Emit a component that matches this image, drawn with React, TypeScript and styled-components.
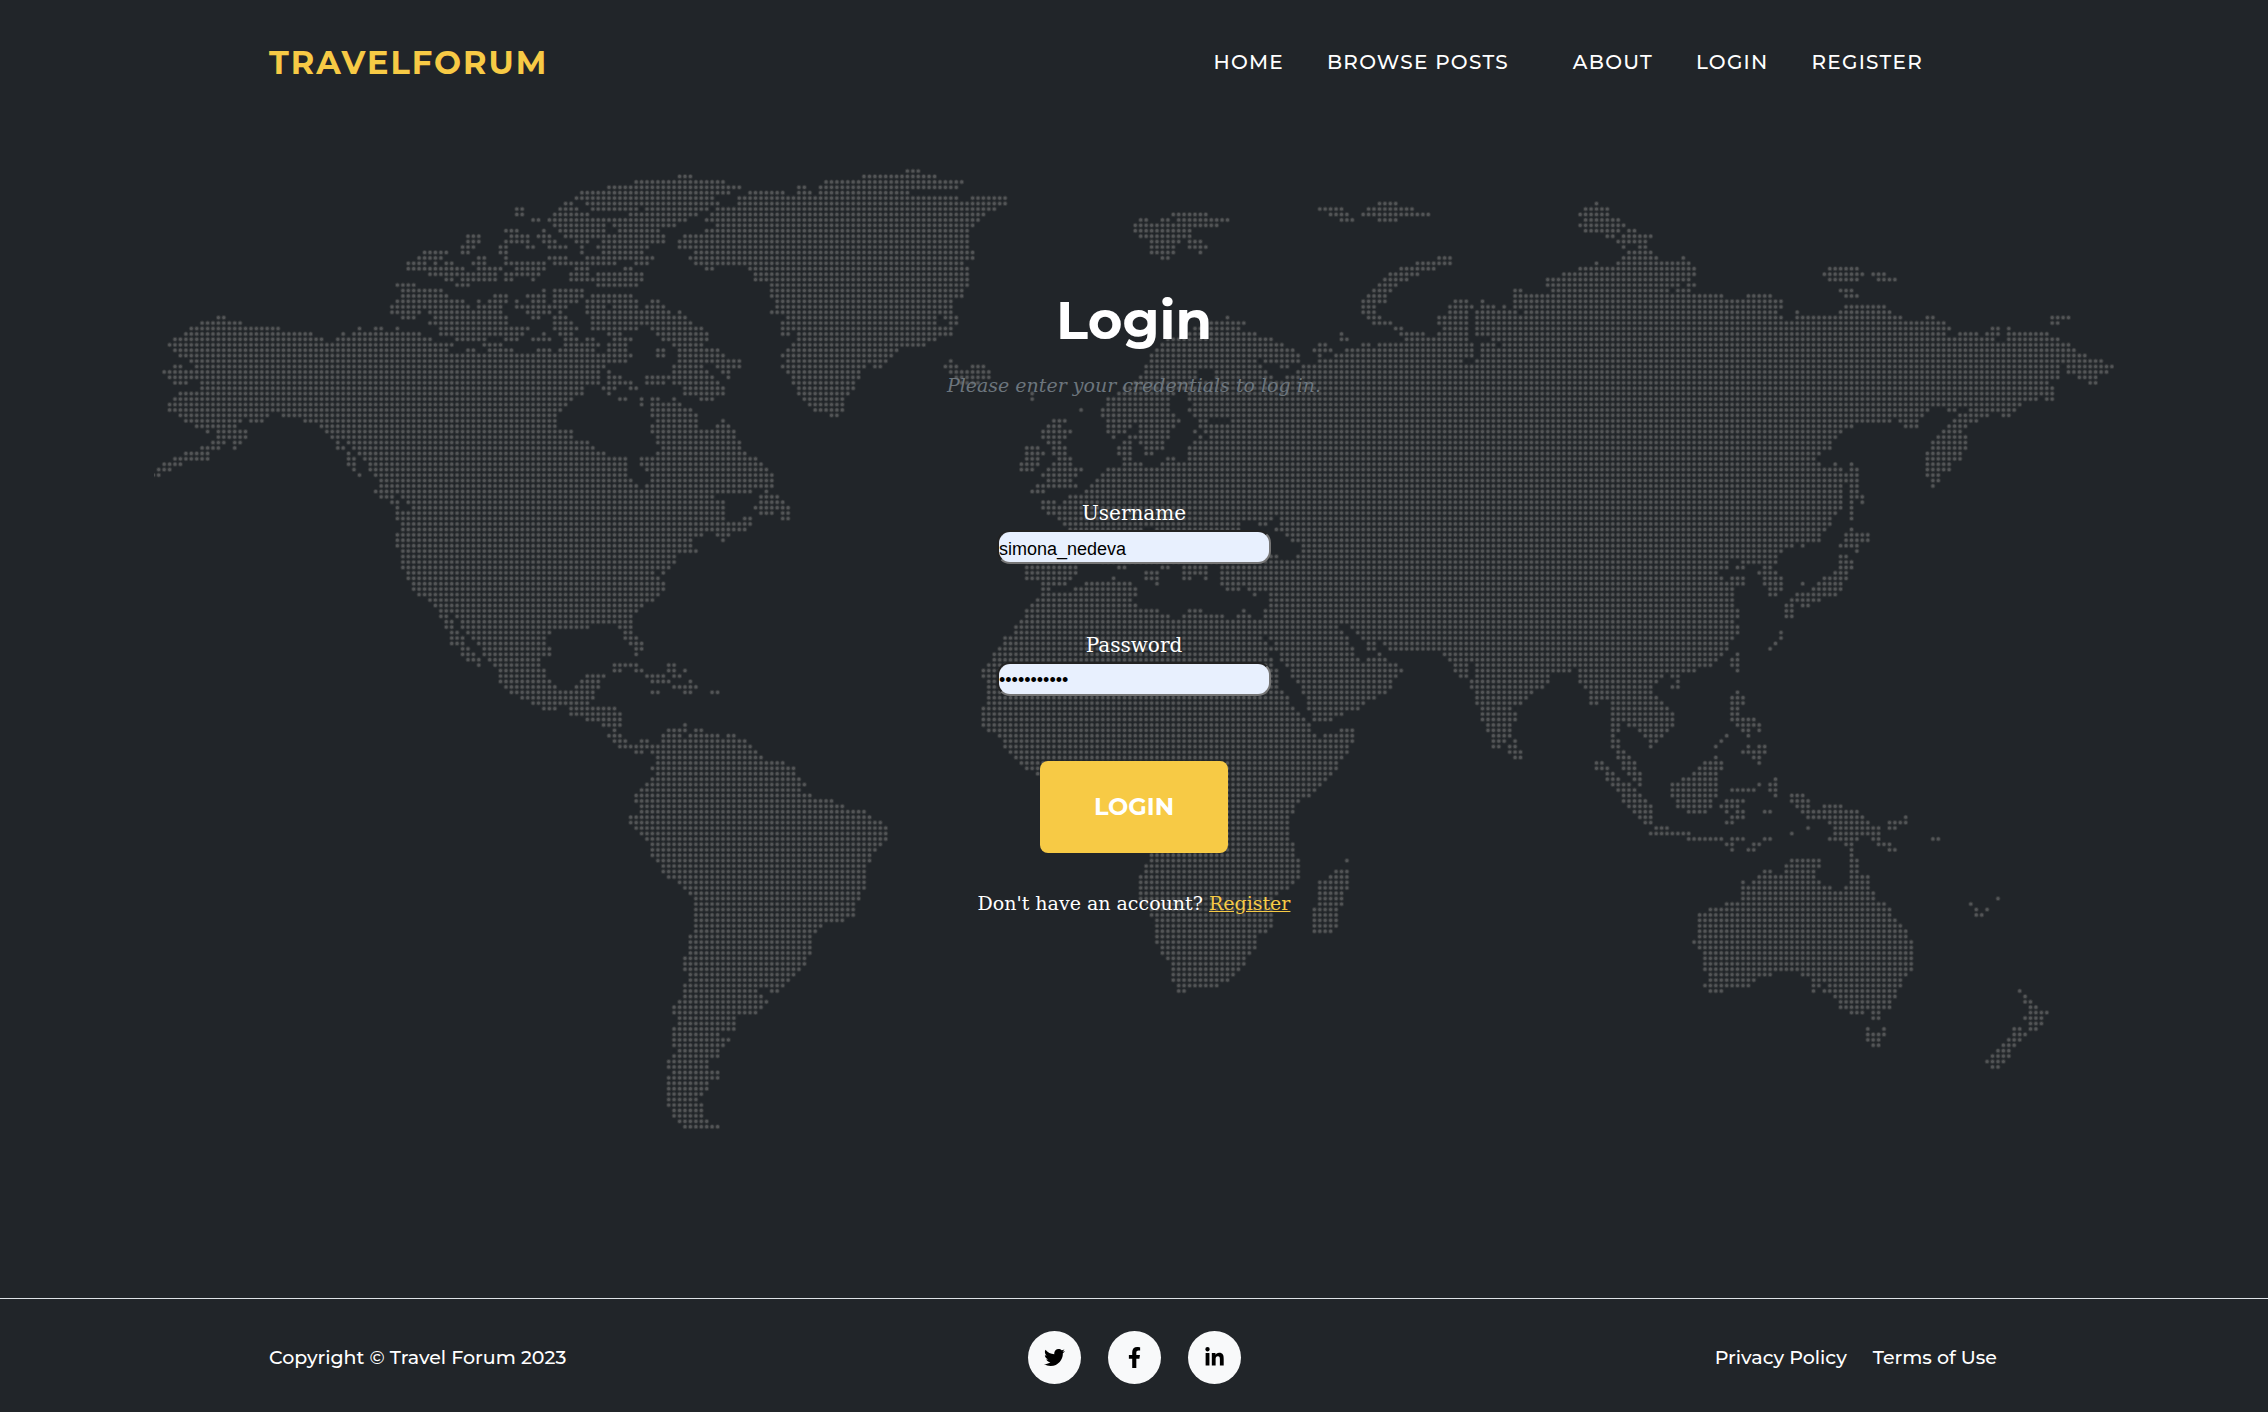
import React from 'react';
import styled, { createGlobalStyle } from 'styled-components';
import { FaTwitter, FaFacebookF, FaLinkedinIn } from 'react-icons/fa';

const sans = "Montserrat, Inter, 'Open Sans', sans-serif";
const slab = "'Roboto Slab', 'DejaVu Serif', serif";
const yellow = '#f7ca45';

const GlobalStyle = createGlobalStyle`
  *, *::before, *::after { box-sizing: border-box; }
  body {
    margin: 0;
    background: #212529;
    color: #fff;
    font-family: ${slab};
    font-size: 19px;
  }
`;

/* ---------- dotted world map ---------- */

const PITCH = 5.4255;

// The map is stored as sheets. A sheet lists, one line per dot row, the
// spans of land measured in the sheet's own units.
type Sheet = { row: number; origin: number; unit: number; spans: string };

const SHEETS: Sheet[] = [
  {
    row: 2, origin: 140, unit: 3,
    spans: `1489
1407-1489
1325-1489
1309-1489
1277-1293 1342-1489
1130-1146 1260-1309 1358-1489
1130-1146 1244-1342 1472-1489
1179-1195 1228-1489
1244-1391 1423-1489
1098-1130 1212 1260-1391 1440-1489
983-1016 1114-1163 1195-1228 1277-1358 1374-1489
983-1016 1098-1163 1212-1244 1309-1342 1391-1489
967-1000 1082-1098 1163-1179 1228-1277 1325 1374-1489
852-918 967-983 1082-1098 1325 1391-1489
836-901 1016-1032 1098 1228-1277 1342-1489
803-852 885 918-934 1000-1032 1098-1212 1244-1423 1489
803-967 1016-1082 1130-1212 1309-1342 1456-1472
869-1065 1098-1195 1293-1342 1374-1489
918-934 967-1065 1098-1114 1179 1293-1489
771-820 950-983 1374-1489
787-901 1212 1244-1325
787-918 1065-1098 1163-1212 1244-1325 1358-1472
771-967 1016 1049-1098 1130 1179-1212 1244-1309 1342-1489
755-983 1016-1082 1130-1277 1342-1391 1423-1489
755-836 869-1082 1163-1228 1260 1342-1489
235-251 787-820 885-1098 1179-1195 1244-1277 1358-1489
186-300 869-1098 1244-1293 1358-1489
153-414 657 706-722 771 901-1163 1244-1309 1358-1489
137-512 609 641-836 901-1146 1212 1260-1293 1407-1440
104-544 592-869 950-1032 1098-1130 1179-1228 1277-1309 1342-1358 1423-1472
88-934 1032-1082 1277-1374 1407-1456
104-918 983-1000 1049-1114 1195-1228 1260-1358 1407-1456
121-1472
153-1456
104-121 169-1391
72-1374 1407
88-1374 1407-1440
104-137 186-1374 1407-1440 1456-1472
186-1325 1391-1423 1472-1489
121-1325 1407
104-1293 1440-1456
88-1277
88-1260
121-381 430-1244
137-300 332-365 495-1244
169-284 544-1244
202 235-316 560-1293
235-316 576-1293
218-251 284-300 592 625-1342
186-235 284 592-609 641-1358
137-202 625 657-1391
104-202 625-641 674-1456
72-121 625-641 690-1456
56-88 641 690-1456
40-56 657 706-1456
722-1472
722-1489
706-1489
722-755 787-1489
755-771 803-1489
771 820-1489
771-1489
771-1489
787-1489
787-1489
771-1489
771-1489
771-1489
787-1489
787-1489
787-1489
787-1489
803-1489
803-1489
820-1489
820-1489
836-1489
869-1489
885-1489
901-1489
901-918 950-1472
918-934 967-1472
918-934 967-1342 1440-1472
934-950 983-1228 1456-1472
934-967 1000-1212 1456-1489
934-967 1016-1212 1472-1489
967-983 1032-1228 1489`,
  },
  {
    row: 0, origin: 600, unit: 3,
    spans: `922-955
238-271 792-1004
125-369 678-1085
125-417 597-613 662-1069
125-385 450-548 597-629 662-922
125-336 417-1069 1118-1216
125-352 417-1216
141-320 352-1183
125-287 336-1150
125-255 320-336 352-1134
125-222 352-1118
125-173 320-1102
125-190 255-1102
125-190 238-1102
125-141 238-271 287-1102
125 287-1118
125-157 271-1118
125-141 287-1085
320-336 450-1102
125 466-1102
125 466-1102
515-1102
515-1085
515-1085
157-173 531-1053
141-190 531-1053
125-206 238 515-1053
125-255 564-1004 1037-1069
125-271 548-1004 1053-1069
157-304 548-1053
173-320 548-564 597-1053
190-320 597-1004
222-304 580-971
173-190 238-352 564-890
173-190 238-369 548-874
238-417 564-857 1053
222-304 352-417 548-792 825-841 1037-1069 1118-1150
222-320 369-385 564-776 1053-1167
141-336 385 580-776 1069-1167
141-190 222-352 580-760 1085-1134
255-369 597-760
255-369 597-743 1297
125 157-173 222 304-336 613-727 1297
125 157-238 629-727
157-271 645-727 1443
157-287 694-710
173-287 369 1362-1395
157-287 352-385 1346-1379
157-401 1330-1411
173-401 1330-1395
173-417 1346-1379
190-417 1281-1313 1362-1395
173-434 1281-1330 1362-1395
125-466 1281-1313 1379-1411
125-482 1265-1313 1362-1411
141-499 1265-1297 1346-1443
157-515 1330-1427
157-515 1346-1411 1492
141-515 1313-1427 1476-1492
125-450 499 1297-1330 1460-1492
125-336 482-531 1411-1492
125-369 482-548 1330-1362 1395-1492
125-369 466-564 1330-1492
125-369 482-515 548-564 1346-1492
125-369 434-450 548-564 1379-1492
125-450 1395-1492
125-434 1411-1492
125-304 352-385 1411-1492
125-271 369 1411-1492
125-271 1411-1492
125-287 1346-1460
125-222 1297-1443
125-222 1281-1427
125-206 1281-1427
125-157 190 1281-1427
125-173 1281-1411
125-190 1330-1395 1460-1492
125-190 1330-1346 1427-1492
125-173 1330-1492
125-157 1313-1492
125 1297-1492
1281-1492
1281-1492
1265-1492
1249-1492
1249-1492
1216-1492
125 1216-1492
125 1200-1492`,
  },
  {
    row: 6, origin: 1060, unit: 3,
    spans: `959-1008
780-845 926-1057
340-438 812-861 910-1106
242-258 307-324 356-503 845-877 959-1008
226-470
226-389
242-389
275-356 389-421
275-340 389-438
275-340 421
307-324 1138-1171
1073-1171
1024-1122
991-1073
975-1040 1464-1495
959-1008 1464-1495
942-991 1366-1382 1480-1495
926-975 1366-1495
910-975 1187-1220 1268 1366-1495
910-942 1171-1236 1268-1301 1334 1366-1495
910-942 1171-1220 1252-1317 1334-1366 1398-1495
503 926-959 1138-1220 1252-1495
454-552 942-991 1138-1220 1252-1495
405-536 1008-1024 1154-1220 1252-1495
389-585 845 1024-1089 1138-1220 1252-1285 1301-1495
324-634 845-861 1040-1220 1301-1495
307-666 780-796 910-926 959-1236 1268-1301 1334-1495
291-699 763-812 861-1236 1268-1495
275-715 780 828-1236 1268-1495
275-585 617-715 780-1203 1252-1495
258-601 666-682 731-1495
258-405 470-617 715-1495
242-405 470-634 682-1495
226-389 421-1495
193-1495
177-340 389-1495
144-324 389-1495
144-324 405-1495
128-324 389-1495
128-340 405-1495
144-356 421-438 519-1495
144-209 242-340 421-1495
144-193 242-324 405 438-1495
161 209-226 242-324 421 454-1495
193-209 242-307 405-1495
177-209 258-307 389-1495
177-209 258-275 389-1495
193-209 324-340 389-1495
193-242 307-1495
144-1495
128-1495
128-1495
128-1495
128-1495
128-1495
128-1495
128-1495
128-1495
128-634 666-1495
128-536 601-617 666-1495
128-242 291-536 650-1495
128-536 682-1495
128-536 699-1495
128-536 731-1495
128-536 731-1495
128-536 634-650 715-1495
128-1495
177-193 307-324 373-438 487-1495
258-291 373-438 487-1495
161 258-291 373-389 438 487-1495
128-209 291 487-1495
128-226 503-536 568-1495
128-226 585 634-1495
128-209 634-1495
128-226 634-1495
128-291 389-421 552 617-1495
128-324 373-487 536-568 617-1495
128-1495
128-828 877-1495
128-845 893-1495
128-601 634-861 910-1495
128-617 650-861 926-942 975-1495
128-617 634-877 926-942 991-1495`,
  },
  {
    row: 6, origin: 1540, unit: 2.6133,
    spans: `147
119-176
105-176
119-204
105-218
119-204 232-247
176-190 218-289
204-275
218 261-275
232-289
218-303 374
147 204-388
105-403 757-829
62-403 743-843 871-900
62-388 757-829 885-928
62-360 388-403
62-332 360-388 786-814
62-473 544-601 800-829
62-629
62-629 800-900
62-615 672 786-914
62-629 672-942 1013-1027 1339-1382
62-1056 1339-1353
62-1070 1183-1197 1225
62-1056 1098-1141 1169-1197 1225-1325
62-1183 1225-1353
62-1382
62-1396
62-1424
62-1467
62-1353 1382-1495
62-1353 1382-1481
62-1353 1410-1453
62-1325 1439-1453
62-1339
62-1339
62-1297 1325-1339
62-1254
62-1013 1070-1084 1127-1240
62-999 1098-1169 1211-1225
62-914 942-985 1084-1141
62-815 956-985 1070-1112
62-787 1056-1098
62-772 1042-1112
62-758 1027-1112
62-758 1027-1112
62-730 1013-1098
62-716 1013-1098
62-730 772 815 1013-1070
62-787 815-829 1013-1070
62-829 1013-1042
62-829 1027-1042
62-787 815-829 1027
62-787 815-829
62-787 815-843
62-787 815 843
62-787 815
62-772 815
62-758 815
62-758
62-744 815
62-730 800-857
62-730 800-857
62-659 687 786-829
62-630 829
62-616 786-800
62-488 530-616 786-815
62-488 516-530 587-601 786-815
62-459 573-616 772-800
62-474 502-530 587-630 743-800
62-530 587-630 687 729-786
62-502 601-630 715-786
62-502 601-616 672-772
62-502 659-729
62-502 644-659 687-701
62-516 644-659
62-516 644-659
62-502
62-516
62-516 630
62-502 630
62-488 616
62-488 601`,
  },
  {
    row: 89, origin: 400, unit: 3,
    spans: `187-219 252-447 710
203-235 268-415
235 284-415 643-708 806-822
301-431 643-659 708-724 806-822 855
301-431 561-610 741-790 822-838
301-447 545-594 757-806 871
317-464 529-594 822-887
333-578 757-773 855-871 936-952
366-578
398-561
431-464 512-643
512-659
561-659
610-659 855
643 806-855 887-903
627-659 790-838 871-952 985-1001
643-675 724-741 790-1034
659-1050
708-724 757-1066
773-1083
773-1148
757-1181
773-1181
757-1197
741-1213
724-1197
708-1230
708-1295
724-1327
724-1392
692-1409
692-1441
708-1457
724-1457
741-1457
757-1441
757-1425
757-1409
773-1409
790-1392
790-1392
806-1392
838-1392
855-1392
871-1376
887-1376
887-1360
887-1360
887-1360
887-1327
887-1262
887-1246
871-1230
871-1230
871-1230
871-1230
855-1213
855-1213
855-1197
871-1181
871-1164
855-1148
855-1066 1115-1132
855-1083
838-1099
822-1083
822-1066
838-1001
838-1001
822-1001
822-952
822-985
822-969
838-952
822-952
806-920
806-920
822-952
806-952
806-920
806-920
806-903
806-887
806-903
822-903
822-903
838-920
855-952`,
  },
  {
    row: 89, origin: 920, unit: 3,
    spans: `222-1036 1085-1300 1378
222-1052 1085-1313 1345-1378
206-1052 1101-1378
190-1068 1117-1378
190-1068 1117-1378
206-1068 1133-1378
206-1068 1150-1378
206-1085 1150-1378
206-1101 1166-1362
206-1101 1166-1329
190-1117 1166-1313
190-1133 1182-1264
190-1150 1182-1231
190-1166
206-1166 1264-1296
238-1182 1215-1296
255-1296
255-1280
271-1280
287-1264
304-1247
320-1247
352-1231
480-1215
500-1198
500-1182
600-1166
650-1133
660-1117
660-1117
660-1101
660-1101
660-1101
660-1101
660-1101
660-1117
694-1117
694-1117
694-1133 1280
678-1133
678-1133 1247-1280
661-1133 1231-1280
661-1117 1198-1280
661-1101 1198-1280
661-1068 1198-1264
661-1052 1198-1264
678-1052 1198-1264
694-1052 1182-1247
694-1052 1182-1247
710-1052 1182-1247
710-1052 1182-1247
710-1036 1182-1231
710-1003
710-1003
726-1003
726-987
743-971
759-971
759-954
759-938
759-922
775-889
775-792`,
  },
  {
    row: 89, origin: 1380, unit: 3,
    spans: `193-763
14 209-763
14-47 226-259 291-763
14-63 226-259 291-568 600-763
14-47 242-259 291-503 600-763
14-30 275-503 600-763
14-30 275-487 616-763
14 291-454 633-763
291-438 633-763
291-422 633-649 698-763
307-389 698-763
307-405 698-763
307-405 698-763
324-389 698-714 747-763
324-389 698-714
340-389 698
340-373 405 698-714
340-356 389-405 698-714
389-422 714-730
405-422 714-747
649-665 730-763
649-682 730-763
682-698 747-763
682-714 763
698-747
714-763
730-763
730-763
747-763
763`,
  },
  {
    row: 89, origin: 1540, unit: 2.6133,
    spans: `261-474 516
261-459 502-516
261-445 502-516
261-403 516
261-318 346-360
261-304 360
261-289 346-360
261-289 516
261-304 502-530
261-318 502-530
261-332 502-516
261-346 502-516
261-346 502-559
261-346 516-573
261-332 530-545 573
275-318 488 545
289-304 474
289 459 545 573-587
530-587
459 559-573
431-474 573
417-474
261 403-459
261 374-459 616
261 346-459 573 602-616
346-459 502-559 602-616
261 346-459 616 659-687
261-275 360-445 488-530 659-701
261-289 360-445 474-516 673-701 743-786
261-289 389-431 488 516-530 587-602 687-829
261-289 502-530 701-843 956
275-289 488-502 758-857 914-956
304-332 701 772-885 914-928
289-389 659 772-885
389-474 502-530 587-602 758-829 871-885 1027-1041
488-502 559-573 800-814 885-914
502 545-559 814 914-928
814
659-729 814-829
644-729 814-829
587-602 644-715 814-829
573-715 814-857
530 559-729 814-857
530-758 800-857
530-871
530-871 1197
488-900 1126
445-914 1140 1168
417-914 1140-1154
417-928
417-942
417-956
417-956
403-970
417-970
431-970
431-970
431-970
431-970
445-602 687-956
445-559 715-942
431-545 715-729 758-942
445-474 715 743-928 1253
772-928 1268
786-914 1268-1282
786-914 1282-1297
814-843 871-885 1282-1325
871-885 1268-1311
1282-1311
857 900 1240-1253 1282-1297
857-900 1240-1268
857-885 1226-1253
871-885 1211-1240
1197-1226
1183-1226
1168-1211
1183-1197`,
  },
];

function buildDots(): string {
  let d = '';
  for (const { row, origin, unit, spans } of SHEETS) {
    const column = (v: number) => Math.round((v / unit + origin - 153.3) / PITCH);
    spans.split('\n').forEach((line, i) => {
      const y = (4 + (row + i) * 5.43).toFixed(1);
      for (const span of line.trim().split(' ')) {
        const [a, b = a] = span.split('-').map(Number);
        for (let c = column(a); c <= column(b); c++) {
          d += `M${(c * PITCH - 0.7).toFixed(1)} ${y}h0`;
        }
      }
    });
  }
  return d;
}

const DOTS = buildDots();

const Map = styled.svg`
  display: block;
  width: 100%;
  max-width: 1960px;
  height: auto;
  margin-top: 43px;
`;

// Each dot is a bright core on a faint rim, so neighbours nearly touch.
const WorldMap = () => (
  <Map viewBox="0 0 1960 964" aria-hidden="true">
    <g fill="none" strokeLinecap="round">
      <path d={DOTS} stroke="#343739" strokeWidth="5" />
      <path d={DOTS} stroke="#535557" strokeWidth="3.2" />
    </g>
  </Map>
);

/* ---------- page ---------- */

const Page = styled.div`
  min-height: 100vh;
  display: flex;
  flex-direction: column;
`;

const Container = styled.div`
  width: 100%;
  max-width: 1730px;
  margin: 0 auto;
`;

const Header = styled(Container).attrs({ as: 'header' })`
  height: 124px;
  display: flex;
  align-items: center;
  justify-content: space-between;
  font-family: ${sans};
`;

const Brand = styled.a`
  padding-top: 2px;
  color: ${yellow};
  font-size: 32px;
  line-height: 48px;
  font-weight: 700;
  letter-spacing: 0.0625em;
  text-decoration: none;
  text-transform: uppercase;
`;

const Nav = styled.nav`
  display: flex;
  gap: 43px;
  padding-right: 76px;
`;

const NavLink = styled.a<{ $apart?: boolean }>`
  color: #fff;
  font-size: 20px;
  line-height: 32px;
  font-weight: 500;
  letter-spacing: 0.0625em;
  text-decoration: none;
  text-transform: uppercase;
  margin-left: ${({ $apart }) => ($apart ? '21px' : '0')};
`;

const Main = styled.main`
  flex: 1;
  display: grid;
  justify-items: center;
  align-items: start;

  > * { grid-area: 1 / 1; }
`;

const Panel = styled.section`
  padding-top: 160px;
  display: flex;
  flex-direction: column;
  align-items: center;
`;

const Title = styled.h1`
  margin: 0;
  font-family: ${sans};
  font-size: 53px;
  line-height: 72px;
  font-weight: 700;
`;

const Lead = styled.p`
  margin: 13px 0 0;
  color: #6c757d;
  font-style: italic;
  line-height: 32px;
`;

const Form = styled.form`
  display: flex;
  flex-direction: column;
  align-items: center;
  padding-top: 96px;
`;

const Field = styled.div`
  display: flex;
  flex-direction: column;
  align-items: center;
  margin-bottom: 65px;
`;

const Label = styled.label`
  font-size: 20px;
  line-height: 32px;
  margin-bottom: 1px;
`;

const Input = styled.input`
  width: 274px;
  height: 34px;
  padding: 4px 0 0;
  border: 2px solid;
  border-color: #222 #767676 #767676 #222;
  border-radius: 13px;
  background: #e8f0fe;
  color: #000;
  font-family: 'Liberation Sans', Arial, sans-serif;
  font-size: 18px;
  outline: none;

  &[type='password'] { padding-top: 2px; }
`;

const Submit = styled.button`
  width: 188px;
  height: 92px;
  padding-bottom: 3px;
  border: 0;
  border-radius: 8px;
  background: ${yellow};
  color: #fff;
  font-family: ${sans};
  font-size: 24px;
  font-weight: 700;
  text-transform: uppercase;
`;

const Hint = styled.p`
  margin: 34px 0 0;
  line-height: 32px;
`;

const HintLink = styled.a`
  color: ${yellow};
  text-decoration: underline;
`;

const FooterBar = styled.footer`
  border-top: 1px solid #dee2e6;
  padding: 32px 0 28px;
  font-family: ${sans};
  font-weight: 500;
`;

const FooterRow = styled(Container)`
  display: grid;
  grid-template-columns: 1fr auto 1fr;
  align-items: center;
  line-height: 32px;
`;

const Socials = styled.div`
  display: flex;
  gap: 27px;
`;

const Social = styled.a`
  width: 53px;
  height: 53px;
  border-radius: 50%;
  background: #f8f9fa;
  color: #000;
  font-size: 21px;
  display: grid;
  place-items: center;
`;

const Legal = styled.div`
  display: flex;
  justify-content: flex-end;
  gap: 26px;
  padding-right: 2px;
`;

const LegalLink = styled.a`
  color: #fff;
  text-decoration: none;
`;

export default function App() {
  return (
    <Page>
      <GlobalStyle />
      <Header>
        <Brand href="#">TravelForum</Brand>
        <Nav>
          <NavLink href="#">Home</NavLink>
          <NavLink href="#">Browse Posts</NavLink>
          <NavLink href="#" $apart>About</NavLink>
          <NavLink href="#">Login</NavLink>
          <NavLink href="#">Register</NavLink>
        </Nav>
      </Header>
      <Main>
        <WorldMap />
        <Panel>
          <Title>Login</Title>
          <Lead>Please enter your credentials to log in.</Lead>
          <Form onSubmit={(e) => e.preventDefault()}>
            <Field>
              <Label htmlFor="username">Username</Label>
              <Input id="username" type="text" defaultValue="simona_nedeva" />
            </Field>
            <Field>
              <Label htmlFor="password">Password</Label>
              <Input id="password" type="password" defaultValue="travelforum" />
            </Field>
            <Submit type="submit">Login</Submit>
          </Form>
          <Hint>
            Don't have an account? <HintLink href="#">Register</HintLink>
          </Hint>
        </Panel>
      </Main>
      <FooterBar>
        <FooterRow>
          <span>Copyright © Travel Forum 2023</span>
          <Socials>
            <Social href="#" aria-label="Twitter"><FaTwitter /></Social>
            <Social href="#" aria-label="Facebook"><FaFacebookF /></Social>
            <Social href="#" aria-label="LinkedIn"><FaLinkedinIn /></Social>
          </Socials>
          <Legal>
            <LegalLink href="#">Privacy Policy</LegalLink>
            <LegalLink href="#">Terms of Use</LegalLink>
          </Legal>
        </FooterRow>
      </FooterBar>
    </Page>
  );
}
